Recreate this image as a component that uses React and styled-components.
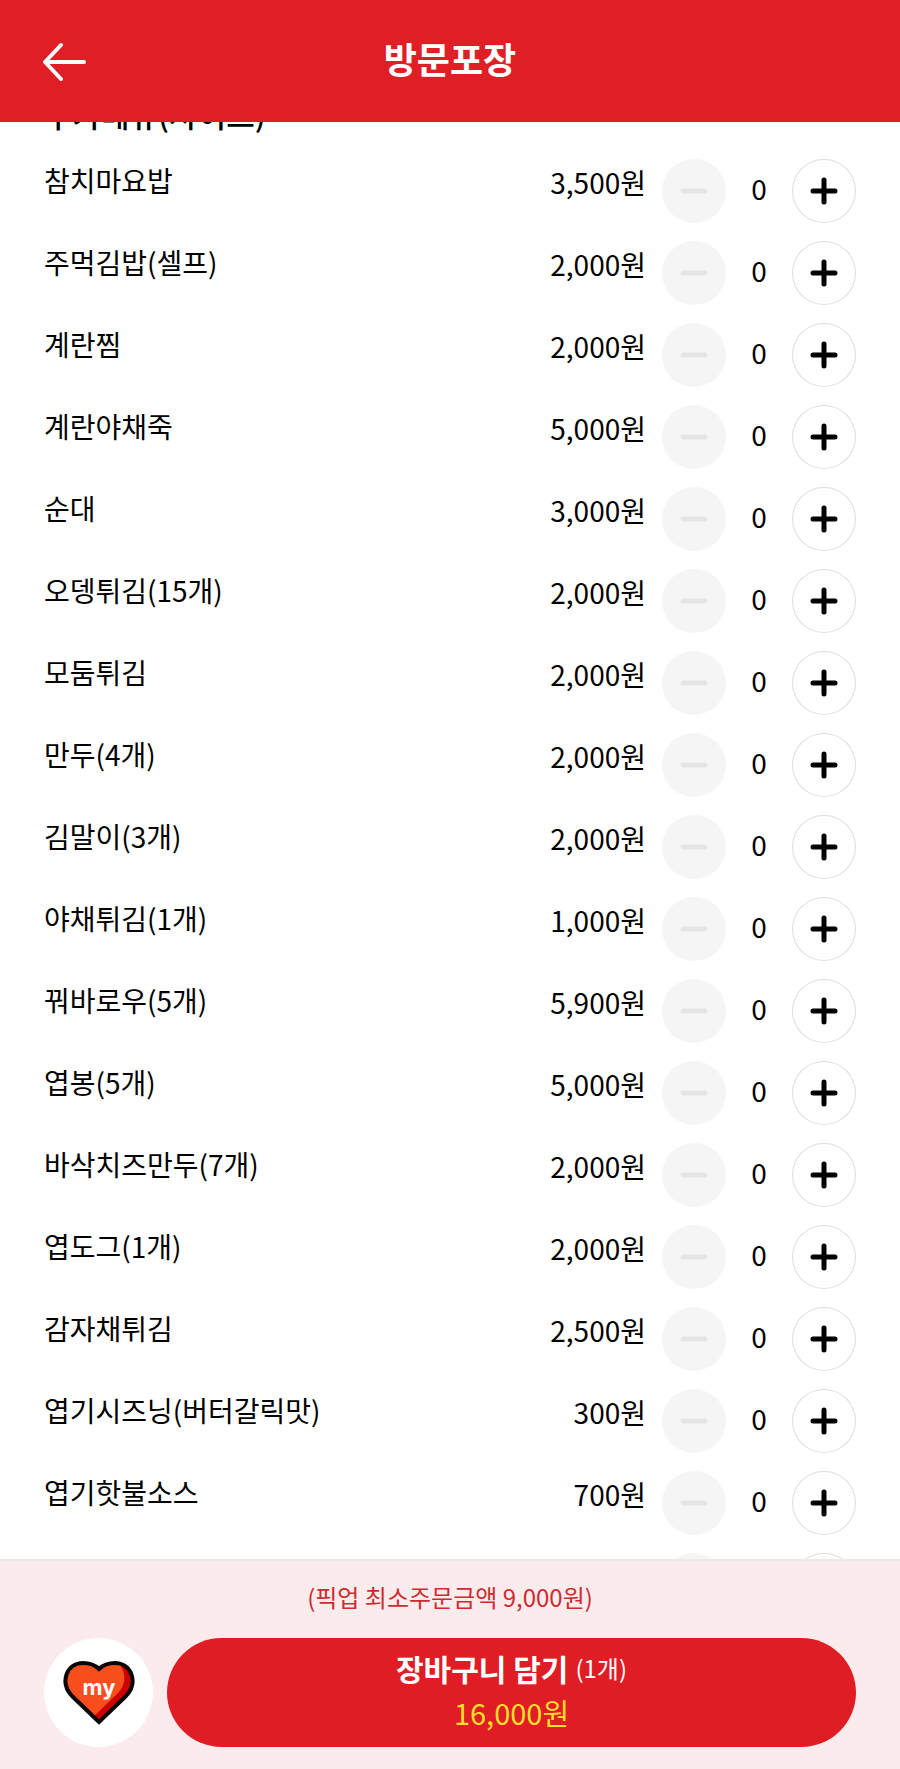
import React, { useState } from "react";
import styled, { createGlobalStyle } from "styled-components";

const GlobalStyle = createGlobalStyle`
  * { box-sizing: border-box; }
  body {
    margin: 0;
    color: #000;
    background: #fff;
    font-family: "Noto Sans CJK KR", "Noto Sans", sans-serif;
  }
  button { font: inherit; color: inherit; border: 0; padding: 0; cursor: pointer; }
`;

const Screen = styled.div`
  display: flex;
  flex-direction: column;
  height: 100vh;
`;

const Header = styled.header`
  display: grid;
  grid-template-columns: 44px 1fr 44px;
  align-items: center;
  flex: none;
  height: 122px;
  padding: 0 42px;
  background: #e01e25;
  color: #fff;
`;

const BackButton = styled.button`
  display: flex;
  align-items: center;
  height: 44px;
  background: none;
`;

const Title = styled.h1`
  margin: 0;
  padding-bottom: 6px;
  text-align: center;
  font-size: 36px;
  line-height: 52px;
  font-weight: 700;
`;

const Menu = styled.main`
  flex: 1;
  min-height: 0;
  padding: 0 44px;
  overflow-y: auto;
  scrollbar-width: none;
`;

const SectionTitle = styled.h2`
  margin: -30px 0 23px;
  font-size: 31px;
  line-height: 44px;
  font-weight: 500;
`;

const ItemList = styled.ul`
  display: flex;
  flex-direction: column;
  gap: 18px;
  margin: 0;
  padding: 0;
  list-style: none;
`;

const Item = styled.li`
  display: flex;
  align-items: flex-start;
  height: 64px;
  font-size: 28px;
`;

const Name = styled.span`
  flex: 1;
  line-height: 42px;
`;

const Price = styled.span`
  margin-right: 16px;
  line-height: 46px;
`;

const Stepper = styled.div`
  display: grid;
  grid-template-columns: 64px 66px 64px;
  align-items: start;
`;

const RoundButton = styled.button`
  display: flex;
  align-items: center;
  justify-content: center;
  width: 64px;
  height: 64px;
  border-radius: 50%;
  background: ${(p) => (p.disabled ? "#f5f5f5" : "#fff")};
  color: ${(p) => (p.disabled ? "#e5e5e5" : "#000")};
  box-shadow: ${(p) => (p.disabled ? "none" : "inset 0 0 0 1px #dedede")};
`;

const Count = styled.output`
  text-align: center;
  line-height: 59px;
`;

const Footer = styled.footer`
  flex: none;
  padding: 16px 44px 22px;
  border-top: 2px solid #ebe9ea;
  background: #fcebec;
`;

const Notice = styled.p`
  margin: 0 0 21px;
  text-align: center;
  font-size: 24px;
  line-height: 40px;
  color: #cc2b30;
`;

const Actions = styled.div`
  display: flex;
  gap: 14px;
`;

const MyButton = styled.button`
  display: flex;
  align-items: center;
  justify-content: center;
  flex: none;
  width: 109px;
  height: 109px;
  border-radius: 50%;
  background: #fff;
`;

const CartButton = styled.button`
  flex: 1;
  height: 109px;
  padding-bottom: 5px;
  border-radius: 55px;
  background: #e01c24;
  color: #fff;
`;

const CartLine = styled.span`
  display: flex;
  align-items: center;
  justify-content: center;
  gap: 7px;
  font-size: 24px;
  line-height: 44px;
`;

const CartLabel = styled.strong`
  font-size: 30px;
  font-weight: 700;
`;

const Total = styled.span`
  font-size: 29px;
  color: #ffdf2b;
`;

const BackIcon = () => (
  <svg width="44" height="40" viewBox="0 0 44 40" fill="none" stroke="#fff" strokeWidth="4" strokeLinecap="round" strokeLinejoin="round" aria-hidden="true">
    <path d="M19 4 L3 21 L19 38 M3 21 H42" />
  </svg>
);

const SignIcon = ({ plus }) => (
  <svg width="28" height="28" viewBox="0 0 28 28" stroke="currentColor" strokeWidth="5" strokeLinecap="round" aria-hidden="true">
    <path d={plus ? "M3 14 H25 M14 3 V25" : "M3 14 H25"} />
  </svg>
);

const HeartIcon = () => (
  <svg width="72" height="66" viewBox="0 0 72 66" aria-hidden="true">
    <defs>
      <clipPath id="heart-shape">
        <path d="M36 62 L9 36 C-4 22 4 3 20 3 C28 3 33 6 36 9 C39 6 44 3 52 3 C68 3 76 22 63 36 Z" />
      </clipPath>
    </defs>
    <g clipPath="url(#heart-shape)">
      <rect width="72" height="66" fill="#cc0000" />
      <path d="M-6 -4 H49 C64 8 65 24 54 34 L24 63 L-6 50 Z" fill="#f84e1e" />
    </g>
    <path d="M36 62 L9 36 C-4 22 4 3 20 3 C28 3 33 6 36 9 C39 6 44 3 52 3 C68 3 76 22 63 36 Z" fill="none" stroke="#0a0505" strokeWidth="4" />
    <text x="36" y="35" textAnchor="middle" fontFamily="Inter, sans-serif" fontSize="22" fontWeight="700" fill="#fff">my</text>
  </svg>
);

const ITEMS = [
  ["참치마요밥", 3500],
  ["주먹김밥(셀프)", 2000],
  ["계란찜", 2000],
  ["계란야채죽", 5000],
  ["순대", 3000],
  ["오뎅튀김(15개)", 2000],
  ["모둠튀김", 2000],
  ["만두(4개)", 2000],
  ["김말이(3개)", 2000],
  ["야채튀김(1개)", 1000],
  ["꿔바로우(5개)", 5900],
  ["엽봉(5개)", 5000],
  ["바삭치즈만두(7개)", 2000],
  ["엽도그(1개)", 2000],
  ["감자채튀김", 2500],
  ["엽기시즈닝(버터갈릭맛)", 300],
  ["엽기핫불소스", 700],
  ["", null],
];

function MenuItem({ name, price }) {
  const [count, setCount] = useState(0);
  return (
    <Item>
      <Name>{name}</Name>
      {price !== null && <Price>{price.toLocaleString("en-US")}원</Price>}
      <Stepper>
        <RoundButton type="button" disabled={count === 0} aria-label={`${name} 빼기`} onClick={() => setCount(count - 1)}>
          <SignIcon />
        </RoundButton>
        <Count>{count}</Count>
        <RoundButton type="button" aria-label={`${name} 더하기`} onClick={() => setCount(count + 1)}>
          <SignIcon plus />
        </RoundButton>
      </Stepper>
    </Item>
  );
}

export default function App() {
  return (
    <>
      <GlobalStyle />
      <Screen>
        <Header>
          <BackButton type="button" aria-label="뒤로"><BackIcon /></BackButton>
          <Title>방문포장</Title>
        </Header>
        <Menu>
          <SectionTitle>추가메뉴(사이드)</SectionTitle>
          <ItemList>
            {ITEMS.map(([name, price], i) => (
              <MenuItem key={i} name={name} price={price} />
            ))}
          </ItemList>
        </Menu>
        <Footer>
          <Notice>(픽업 최소주문금액 9,000원)</Notice>
          <Actions>
            <MyButton type="button" aria-label="my"><HeartIcon /></MyButton>
            <CartButton type="button">
              <CartLine><CartLabel>장바구니 담기</CartLabel>(1개)</CartLine>
              <CartLine><Total>16,000원</Total></CartLine>
            </CartButton>
          </Actions>
        </Footer>
      </Screen>
    </>
  );
}
